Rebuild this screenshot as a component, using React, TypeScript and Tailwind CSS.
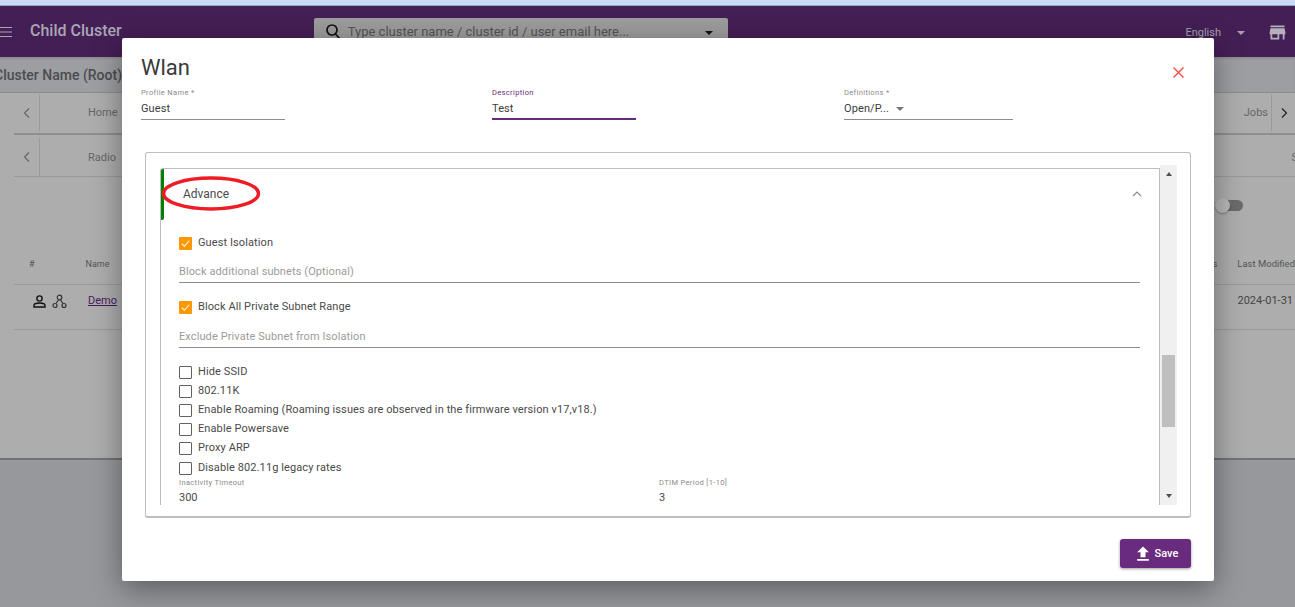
import React from "react";

const font = { fontFamily: "Roboto, sans-serif" };

function Check({ on, label }: { on?: boolean; label: string }) {
  return (
    <div className="flex items-center h-[19px]">
      {on ? (
        <span className="w-[13px] h-[13px] bg-[#ff9800] rounded-[1px] flex items-center justify-center">
          <svg width="11" height="11" viewBox="0 0 24 24" fill="none" stroke="#fff" strokeWidth="2.4"><path d="M4 12.5l5.5 5.5L20 6" /></svg>
        </span>
      ) : (
        <span className="w-[13px] h-[13px] border border-[#616161] rounded-[1px]" />
      )}
      <span className="ml-[6px] text-[11px] tracking-[0.1px] text-[#4a4a4a]">{label}</span>
    </div>
  );
}

function Under({ label, h }: { label: string; h: string }) {
  return (
    <div className={`${h} border-b border-[#8d8d8d] text-[11px] tracking-[0.1px] text-[#9b9b9b] flex items-center`}>{label}</div>
  );
}

function Field({ label, value, w, active, mr }: { label: string; value: string; w: string; active?: boolean; mr: string }) {
  return (
    <div className={`${w} ${mr} h-[32px] ${active ? "border-b-2 border-[#692b7d]" : "border-b border-[#8d8d8d]"}`}>
      <div className={`text-[7.5px] leading-[9px] tracking-[0.35px] ${active ? "text-[#692b7d]" : "text-[#8a8a8a]"}`}>{label}</div>
      <div className="text-[11px] leading-[13px] mt-[5px] text-[#3c3c3c] tracking-[0.1px]">{value}</div>
    </div>
  );
}

function Background() {
  return (
    <div className="w-[1295px] h-[607px] overflow-hidden flex flex-col bg-[#97989c]">
      <div className="h-[5px] bg-[#c8daf5] border-b border-[#9aa5c4] box-content" />
      <header className="h-[51px] bg-[#441f55] flex items-start shrink-0 relative">
        <svg className="mt-[20px] shrink-0" width="12" height="12" viewBox="0 0 12 12" stroke="#a9a3b3" strokeWidth="1"><path d="M0 1.5h12M0 6h12M0 10.5h12" /></svg>
        <div className="ml-[18px] mt-[14px] text-[16px] leading-[22px] font-medium text-[#a9a7b5]">Child Cluster</div>
        <div className="ml-[192px] mt-[12px] w-[414px] h-[40px] bg-[#9c9c9c] rounded-t-[2px] flex items-start px-[11px] pt-[5px]">
          <svg width="16" height="18" viewBox="0 0 16 18" fill="none" stroke="#111" strokeWidth="1.7"><circle cx="7" cy="7" r="5" /><path d="M10.5 11l4.5 5" /></svg>
          <span className="ml-[7px] text-[13px] leading-[18px] text-[#555]">Type cluster name / cluster id / user email here...</span>
          <span className="ml-auto mt-[8px] mr-[4px] w-0 h-0 border-x-[4px] border-x-transparent border-t-[4px] border-t-[#111]" />
        </div>
        <div className="ml-auto mt-[20px] text-[11px] leading-[14px] text-[#a5a2b0]">English</div>
        <span className="ml-[16px] mt-[25px] w-0 h-0 border-x-[4px] border-x-transparent border-t-[4px] border-t-[#a5a2b0]" />
        <svg className="ml-[22px] mr-[7px] mt-[16px]" width="21" height="21" viewBox="0 0 24 24" fill="#b4b1bd"><path d="M20 4H4v2h16V4zm1 10v-2l-1-5H4l-1 5v2h1v6h10v-6h4v6h2v-6h1zm-9 4H6v-4h6v4z" /></svg>
      </header>
      <div className="h-[36px] shrink-0 bg-[#9d9ea2] shadow-[inset_0_2px_2px_rgba(0,0,0,0.1)] border-b border-[#8b8c8e] pt-[8px] -ml-[6px]">
        <div className="text-[14px] leading-[20px] font-medium text-[#4c4c4c]">Cluster Name (Root)</div>
      </div>
      <div className="h-[367px] shrink-0 bg-[#adadad] border-b-2 border-[#6f7375] pl-[14px]">
        <div className="h-[37px] mt-[1px] flex items-center text-[11px] text-[#666]">
          <div className="w-[26px] h-full flex items-center justify-center border-r border-[#9a9a9a]">
            <svg width="12" height="12" viewBox="0 0 12 12" fill="none" stroke="#666" strokeWidth="1.2"><path d="M8 1.5L3.5 6 8 10.5" /></svg>
          </div>
          <span className="ml-[48px] mt-[1px]">Home</span>
          <span className="ml-auto mr-[3px] mt-[1px]">Jobs</span>
          <div className="w-[24px] h-full flex items-center justify-center border-l border-[#9a9a9a]">
            <svg width="12" height="12" viewBox="0 0 12 12" fill="none" stroke="#222" strokeWidth="1.2"><path d="M4 1.5L8.5 6 4 10.5" /></svg>
          </div>
        </div>
        <div className="h-[2px] mt-[2px] bg-[#8f8f8f]" />
        <div className="h-[39px] mt-[3px] flex items-center border-b border-[#999] text-[11px] text-[#666]">
          <div className="w-[26px] h-full flex items-center justify-center border-r border-[#9a9a9a]">
            <svg width="12" height="12" viewBox="0 0 12 12" fill="none" stroke="#666" strokeWidth="1.2"><path d="M8 1.5L3.5 6 8 10.5" /></svg>
          </div>
          <span className="ml-[48px] mt-[2px]">Radio</span>
          <span className="ml-auto -mr-[3px] mt-[2px]">S</span>
        </div>
        <div className="h-[56px] flex justify-end items-center pr-[52px]">
          <span className="relative w-[28px] h-[11px] rounded-full bg-[#6a6a6a]">
            <span className="absolute left-0 -top-[2px] w-[15px] h-[15px] rounded-full bg-[#b8b8b8] shadow-[0_1px_2px_rgba(0,0,0,0.3)]" />
          </span>
        </div>
        <div className="h-[52px] border-b border-[#999] flex items-center pt-[12px] text-[9px] text-[#555]">
          <span className="ml-[15px]">#</span>
          <span className="ml-[51px]">Name</span>
          <span className="ml-auto mr-[20px] text-[9.5px]">s</span>
          <span className="text-[9.5px] whitespace-nowrap">Last Modified</span>
        </div>
        <div className="h-[45px] border-b border-[#999] flex items-center pb-[11px]">
          <svg className="ml-[18px]" width="15" height="15" viewBox="0 0 15 15" fill="none" stroke="#111" strokeWidth="1.4"><circle cx="7.5" cy="4.5" r="2.6" /><path d="M2 13v-1.5c0-1.8 3-2.5 5.5-2.5s5.5.7 5.5 2.5V13z" /></svg>
          <svg className="ml-[5px]" width="15" height="15" viewBox="0 0 15 15" fill="none" stroke="#333" strokeWidth="1.2"><circle cx="7.5" cy="3.5" r="2.3" /><circle cx="3" cy="11.5" r="2" /><circle cx="12" cy="11.5" r="2" /><path d="M6.5 6L4 9.5M8.5 6L11 9.5" /></svg>
          <span className="ml-[21px] text-[11px] text-[#4a1a5e] underline">Demo</span>
          <span className="ml-auto mr-[2px] text-[11px] text-[#444]">2024-01-31</span>
        </div>
      </div>
    </div>
  );
}

export default function App() {
  return (
    <div style={font} className="relative w-[1295px] h-[607px] overflow-hidden">
      <Background />
      <div className="absolute left-[122px] top-[38px] w-[1092px] h-[543px] bg-white rounded-[2px] shadow-[0_8px_30px_rgba(0,0,0,0.4)] px-[19px] flex flex-col">
        <div className="flex items-start justify-between shrink-0 h-[47px]">
          <h1 className="text-[22px] leading-[28px] mt-[16px] text-[#3a3a3a]">Wlan</h1>
          <svg className="mt-[29px] mr-[11px]" width="11" height="11" viewBox="0 0 12 12" stroke="#f4534a" strokeWidth="1.6"><path d="M0.5 0.5l11 11M11.5 0.5l-11 11" /></svg>
        </div>
        <div className="flex shrink-0 mt-[3px] h-[32px]">
          <Field label="Profile Name *" value="Guest" w="w-[144px]" mr="mr-[207px]" />
          <Field label="Description" value="Test" w="w-[144px]" mr="mr-[208px]" active />
          <div className="w-[169px] h-[32px] border-b border-[#8d8d8d]">
            <div className="text-[7.5px] leading-[9px] tracking-[0.35px] text-[#8a8a8a]">Definitions *</div>
            <div className="flex items-center mt-[5px] text-[11px] leading-[13px] text-[#3c3c3c] tracking-[0.1px]">
              Open/P...
              <span className="ml-[7px] w-0 h-0 border-x-[4px] border-x-transparent border-t-[4px] border-t-[#777]" />
            </div>
          </div>
        </div>
        <div className="mt-[32px] ml-[4px] w-[1046px] h-[366px] shrink-0 border border-[#bdbdbd] border-b-2 rounded-[3px] pt-[12px] pl-[14px] flex">
          <div className="w-[1000px] h-[340px] pt-[3px]">
            <div className="relative h-[337px] border-l border-t border-r border-[#bdbdbd] rounded-tl-[3px] overflow-hidden pl-[18px]">
              <span className="absolute -left-px top-0 w-[4px] h-[51px] bg-[#008000] rounded-b-[2px]" />
              <div className="h-[50px] flex items-center justify-between pr-[16px] pl-[4px]">
                <span className="text-[12px] text-[#4a4a4a]">Advance</span>
                <svg width="12" height="12" viewBox="0 0 12 12" fill="none" stroke="#8a8a8a" strokeWidth="1.2"><path d="M2 8l4-4 4 4" /></svg>
              </div>
              <div className="w-[961px]">
                <div className="mt-[15px]"><Check on label="Guest Isolation" /></div>
                <div className="mt-[10px]"><Under h="h-[20px]" label="Block additional subnets (Optional)" /></div>
                <div className="mt-[15px]"><Check on label="Block All Private Subnet Range" /></div>
                <div className="mt-[10px]"><Under h="h-[21px]" label="Exclude Private Subnet from Isolation" /></div>
                <div className="mt-[15px]">
                  <Check label="Hide SSID" />
                  <Check label="802.11K" />
                  <Check label="Enable Roaming (Roaming issues are observed in the firmware version v17,v18.)" />
                  <Check label="Enable Powersave" />
                  <Check label="Proxy ARP" />
                  <div className="mt-[1px]"><Check label="Disable 802.11g legacy rates" /></div>
                </div>
                <div className="flex">
                  <div className="w-[480px]">
                    <div className="text-[7.5px] leading-[9px] text-[#8a8a8a] tracking-[0.35px]">Inactivity Timeout</div>
                    <div className="text-[11px] leading-[13px] mt-[4px] text-[#4a4a4a]">300</div>
                  </div>
                  <div>
                    <div className="text-[7.5px] leading-[9px] text-[#8a8a8a] tracking-[0.35px]">DTIM Period [1-10]</div>
                    <div className="text-[11px] leading-[13px] mt-[4px] text-[#4a4a4a]">3</div>
                  </div>
                </div>
              </div>
            </div>
          </div>
          <div className="w-[17px] h-[340px] bg-[#f0f0f0] flex flex-col items-center">
            <span className="mt-[7px] w-0 h-0 border-x-[3.5px] border-x-transparent border-b-[4px] border-b-[#505050]" />
            <span className="mt-[179px] w-[13px] h-[72px] bg-[#bfbfbf]" />
            <span className="mt-[67px] w-0 h-0 border-x-[3.5px] border-x-transparent border-t-[4px] border-t-[#505050]" />
          </div>
        </div>
        <div className="flex justify-end mt-[21px] mr-[4px]">
          <button className="w-[71px] h-[29px] bg-[#692b7d] rounded-[3px] shadow-[0_1px_3px_rgba(0,0,0,0.4)] text-white text-[11px] font-medium flex items-center justify-center gap-[2px]">
            <svg width="20" height="20" viewBox="0 0 24 24" fill="#fff"><path d="M9 16h6v-6h4l-7-7-7 7h4zm-4 2h14v2H5z" /></svg>
            <span className="mt-[1px]">Save</span>
          </button>
        </div>
      </div>
      <svg className="absolute left-[160px] top-[175px]" width="102" height="37" viewBox="0 0 102 37" fill="none">
        <ellipse cx="51" cy="18.5" rx="47.5" ry="15.5" stroke="#ee1c25" strokeWidth="3.5" />
      </svg>
    </div>
  );
}
